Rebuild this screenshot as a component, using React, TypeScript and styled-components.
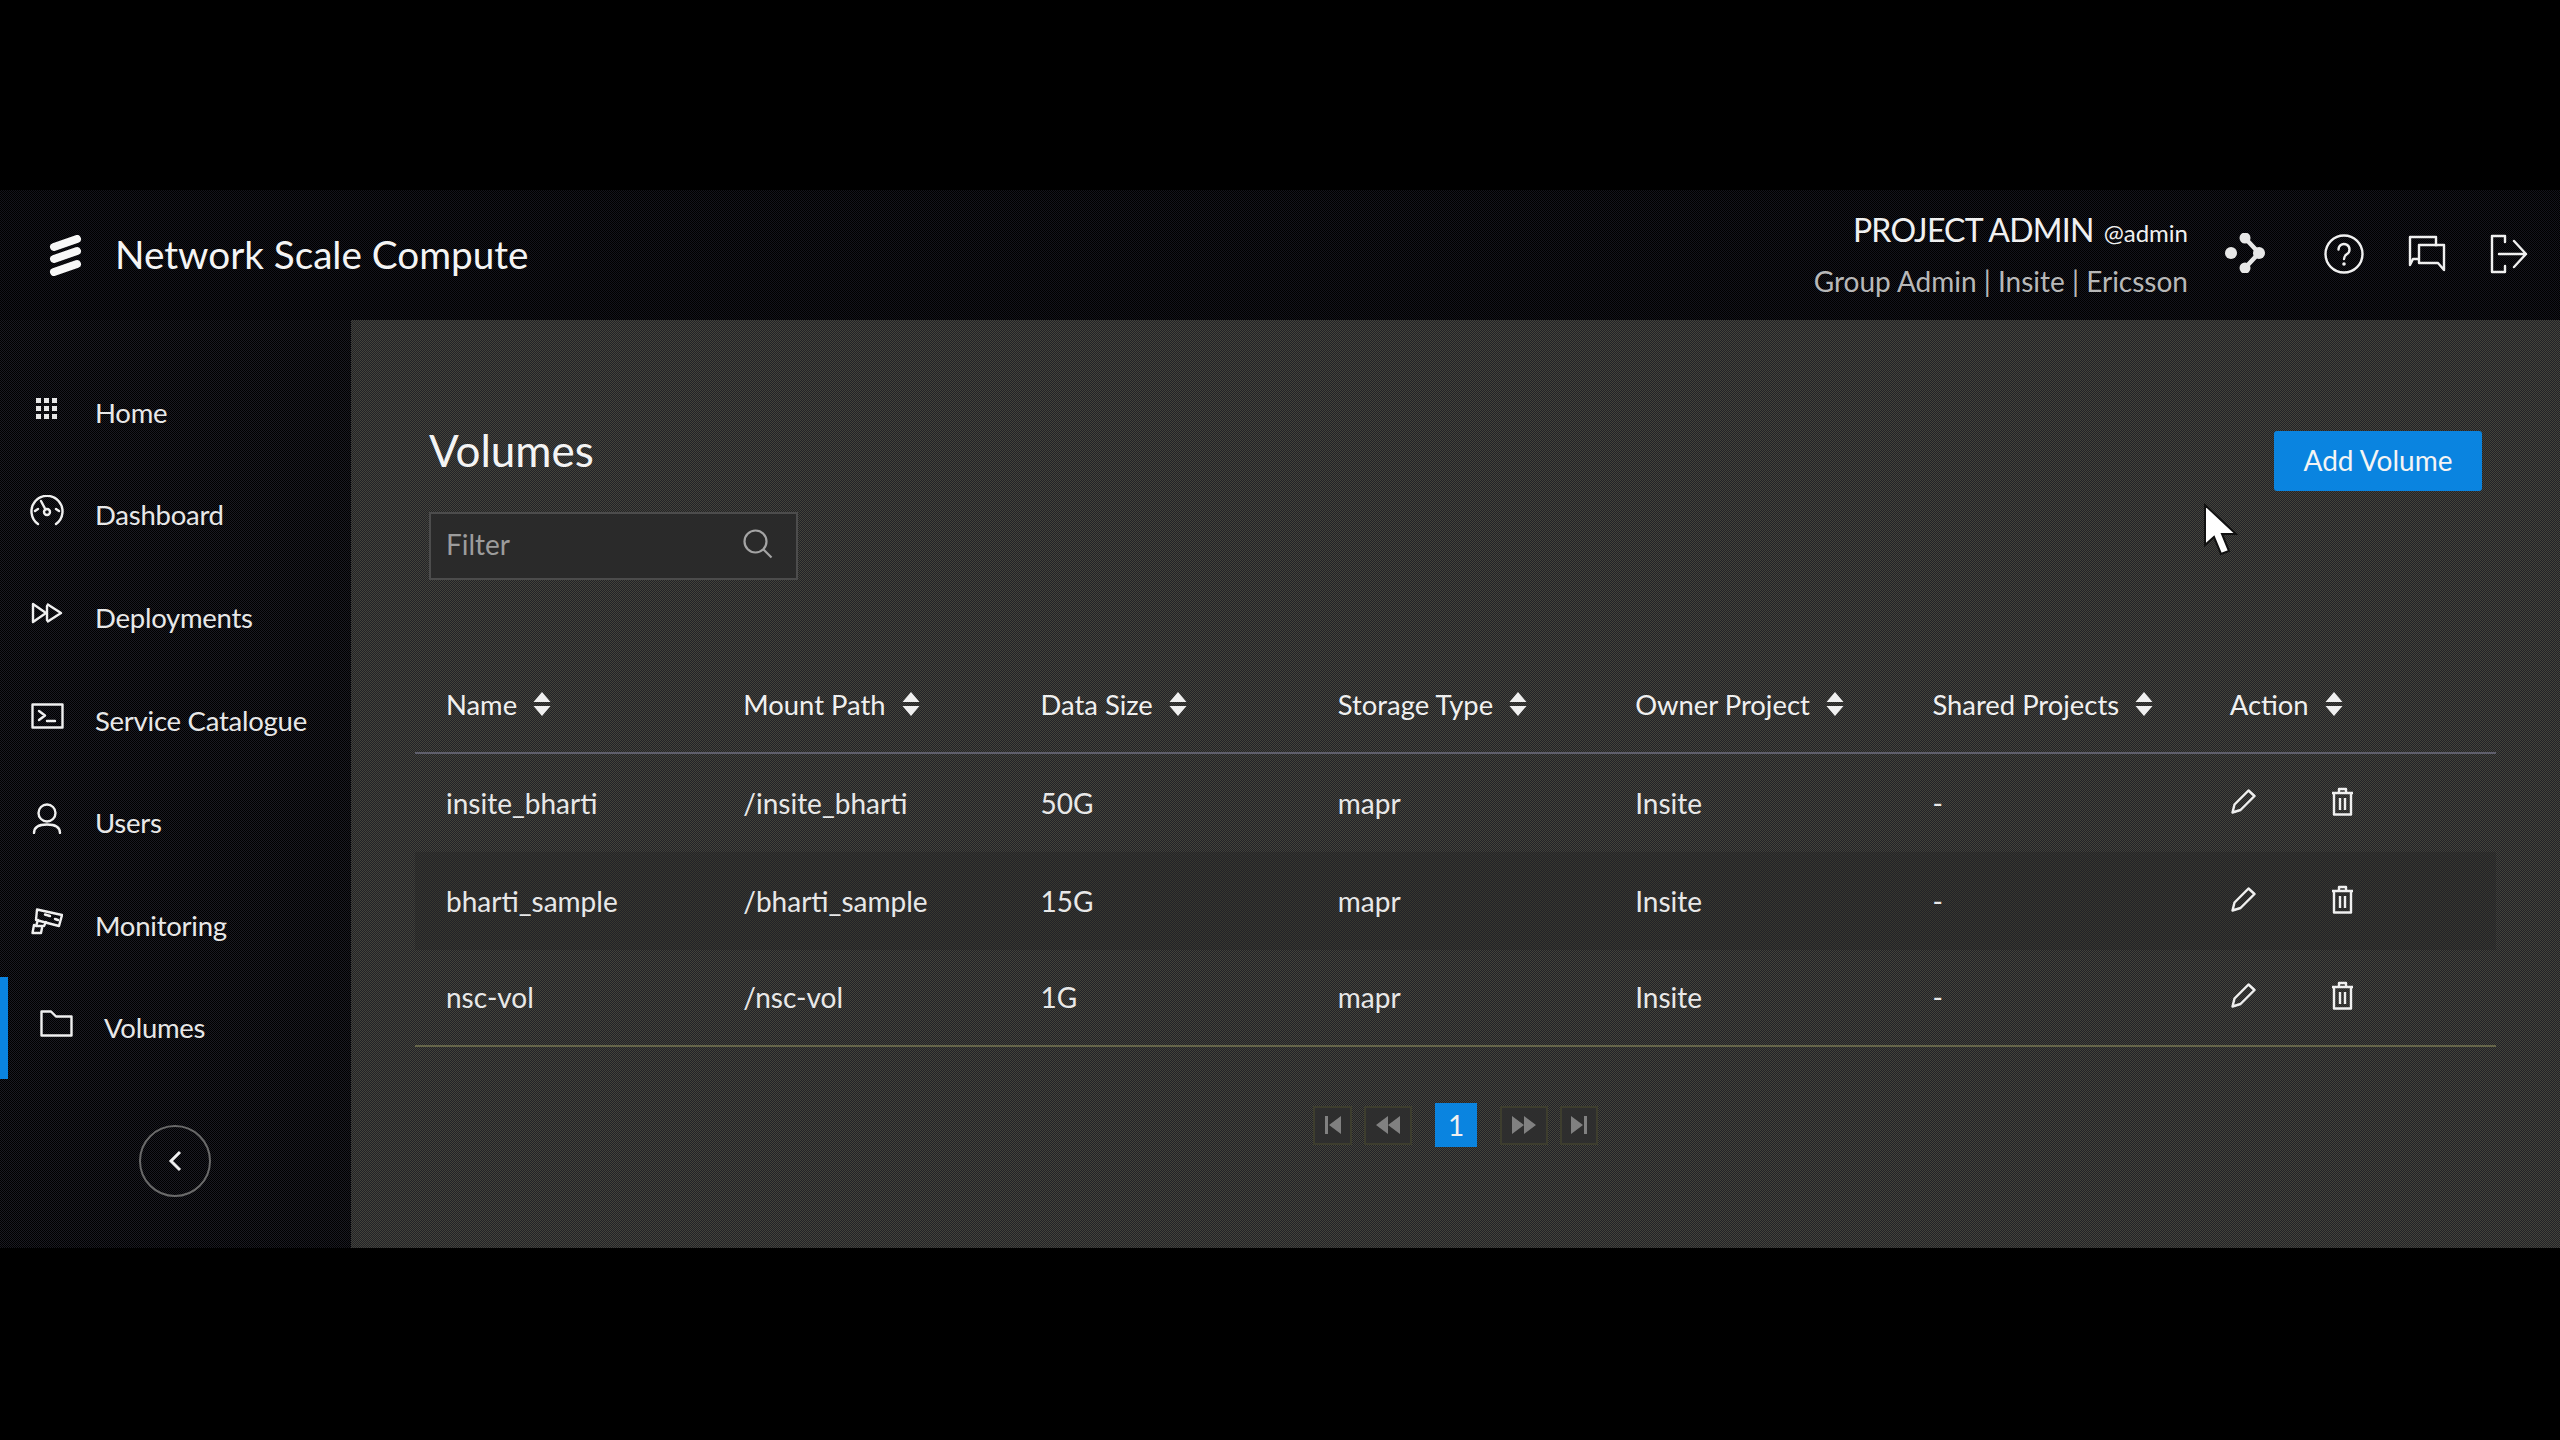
import React from "react";
import styled, { createGlobalStyle } from "styled-components";

const GlobalStyle = createGlobalStyle`
  html, body {
    margin: 0;
    padding: 0;
    background: #000;
  }
  * {
    box-sizing: border-box;
  }
`;

const FONT = `Lato, "Noto Sans", "Liberation Sans", sans-serif`;

// the capture has a fine dither over every surface
const dither = (a: string, b: string) =>
  `repeating-conic-gradient(${a} 0 25%, ${b} 0 50%) 0 0 / 2px 2px`;

const Page = styled.div`
  position: relative;
  width: 2560px;
  height: 1440px;
  padding-top: 190px;
  background: #000;
  font-family: ${FONT};
  color: #f0f0f0;
  overflow: hidden;
`;

const Frame = styled.div`
  display: flex;
  flex-direction: column;
  height: 1058px;
`;

const Header = styled.header`
  display: flex;
  align-items: center;
  justify-content: space-between;
  height: 130px;
  padding: 0 32px 0 49px;
  background: ${dither("#14141c", "#000000")};
`;

const Brand = styled.div`
  display: flex;
  align-items: center;
  gap: 33px;
`;

const BrandName = styled.div`
  margin-bottom: 2px;
  font-size: 38.7px;
  color: #f4f4f4;
`;

const HeaderRight = styled.div`
  display: flex;
  align-items: center;
`;

const UserInfo = styled.div`
  display: flex;
  flex-direction: column;
  align-items: flex-end;
  gap: 9px;
  margin-right: 37px;
`;

const UserRole = styled.div`
  display: flex;
  align-items: baseline;
  gap: 10px;
  margin-top: -2px;
  font-size: 32px;
  line-height: 42px;
  letter-spacing: -0.75px;
  color: #f0f0f0;
`;

const UserHandle = styled.span`
  font-size: 24px;
  letter-spacing: 0;
`;

const UserOrg = styled.div`
  font-size: 28px;
  line-height: 36px;
  color: #b8b8b8;
`;

const HeaderIcons = styled.div`
  display: flex;
  align-items: center;
  gap: 44px;
  padding-bottom: 3px;
`;

const ShareSlot = styled.span`
  display: flex;
  margin-right: 15px;
  margin-bottom: 2px;
`;

const Body = styled.div`
  display: flex;
  flex: 1;
  min-height: 0;
`;

const Sidebar = styled.aside`
  display: flex;
  flex-direction: column;
  width: 351px;
  padding-top: 41px;
  background: ${dither("#1a1a22", "#000000")};
`;

const NavItem = styled.div<{ $active?: boolean }>`
  display: flex;
  align-items: center;
  gap: 31px;
  height: 102.6px;
  padding-left: ${(p) => (p.$active ? 31 : 30)}px;
  border-left: ${(p) => (p.$active ? "8px solid #0a84e0" : "none")};
  font-size: 27.5px;
  letter-spacing: -0.25px;
  color: #e8e8e8;
`;

const NavIcon = styled.span`
  display: flex;
  justify-content: center;
  width: 34px;
  margin-bottom: 8px;
`;

const CollapseButton = styled.button`
  display: flex;
  align-items: center;
  justify-content: center;
  align-self: center;
  width: 72px;
  height: 72px;
  margin: 46px 2px 0 0;
  padding: 0;
  border: 2px solid #6a6a6a;
  border-radius: 50%;
  background: transparent;
`;

const Main = styled.main`
  flex: 1;
  padding: 105px 64px 0;
  background: ${dither("#43433a", "#222228")};
`;

const Toolbar = styled.div`
  display: flex;
  align-items: flex-start;
  justify-content: space-between;
  padding: 0 14px;
`;

const Title = styled.h1`
  margin: 0 0 37px;
  font-size: 44px;
  font-weight: 400;
  line-height: 50px;
  color: #f4f4f4;
`;

const FilterBox = styled.div`
  display: flex;
  align-items: center;
  justify-content: space-between;
  width: 369px;
  height: 68px;
  padding: 0 23px 4px 15px;
  border: 2px solid #4c4c4c;
  background: #2a2a2a;
  font-size: 28px;
  color: #9c9c9c;
`;

const AddButton = styled.button`
  width: 208px;
  height: 60px;
  margin-top: 6px;
  padding: 0 0 3px;
  border: none;
  border-radius: 3px;
  background: #0a84e0;
  font-family: ${FONT};
  font-size: 28px;
  color: #f4f4f4;
`;

const Table = styled.div`
  margin-top: 76px;
`;

const HeadRow = styled.div`
  display: grid;
  grid-template-columns: repeat(7, 1fr);
  align-items: center;
  height: 98px;
  border-bottom: 2px solid #5f5f6c;
  font-size: 27.4px;
  color: #f0f0f0;
`;

const HeadCell = styled.div`
  display: flex;
  align-items: center;
  gap: 16px;
  padding-left: 31px;
`;

const Row = styled.div<{ $striped?: boolean; $last?: boolean }>`
  display: grid;
  grid-template-columns: repeat(7, 1fr);
  align-items: center;
  height: 97.8px;
  background: ${(p) => (p.$striped ? dither("#37372f", "#222228") : "transparent")};
  border-bottom: ${(p) => (p.$last ? "2px solid #66664a" : "none")};
  font-size: 28px;
  color: #e8e8e8;
`;

const Cell = styled.div`
  padding-left: 31px;
`;

const Actions = styled.div`
  display: flex;
  align-items: center;
  gap: 75px;
  padding-left: 32px;
  margin-bottom: 3px;
`;

const Pager = styled.div`
  display: flex;
  align-items: center;
  justify-content: center;
  gap: 23px;
  margin-top: 56px;
`;

const PagerGroup = styled.div`
  display: flex;
  gap: 12px;
`;

const PagerArrow = styled.div<{ $w: number }>`
  display: flex;
  align-items: center;
  justify-content: center;
  width: ${(p) => p.$w}px;
  height: 39px;
  border: 2px solid #3d3d2e;
  background: #2e2e2e;
`;

const PagerCurrent = styled.div`
  display: flex;
  align-items: center;
  justify-content: center;
  width: 42px;
  height: 44px;
  background: #0a84e0;
  font-size: 28px;
  color: #f0f0f0;
`;

const Cursor = styled.svg`
  position: absolute;
  left: 2203px;
  top: 503px;
`;

const line = {
  fill: "none",
  stroke: "#f0f0f0",
  strokeWidth: 2.4,
  strokeLinecap: "round" as const,
  strokeLinejoin: "round" as const,
};

const Logo = () => (
  <svg width="33" height="41" viewBox="0 0 33 41">
    <g stroke="#f8f8f8" strokeWidth="8" strokeLinecap="round">
      <path d="M5 12 L28 4" />
      <path d="M5 24 L28 16" />
      <path d="M5 37 L28 29" />
    </g>
  </svg>
);

const ShareIcon = () => (
  <svg width="40" height="40" viewBox="0 0 40 40">
    <g fill="#e8e8e8">
      <circle cx="6" cy="20" r="6" />
      <circle cx="20" cy="5" r="5.5" />
      <circle cx="34" cy="20" r="6" />
      <circle cx="20" cy="35" r="5.5" />
    </g>
    <path d="M20 5 L34 20 L20 35" fill="none" stroke="#e8e8e8" strokeWidth="4.5" />
  </svg>
);

const HelpIcon = () => (
  <svg width="40" height="40" viewBox="0 0 40 40">
    <circle cx="20" cy="20" r="18.5" {...line} />
    <path d="M14.5 15.5 a5.5 5.5 0 1 1 8.5 4.6 c-2.2 1.5 -3 2.6 -3 5" {...line} />
    <circle cx="20" cy="30" r="1.8" fill="#f0f0f0" />
  </svg>
);

const ChatIcon = () => (
  <svg width="38" height="37" viewBox="0 0 38 37">
    <path d="M10 24 L5 24 L2 30 L2 2 L28 2 L28 10" {...line} strokeLinecap="square" />
    <path d="M11 10 L36 10 L36 35 L30 28 L11 28 Z" {...line} />
  </svg>
);

const LogoutIcon = () => (
  <svg width="38" height="40" viewBox="0 0 38 40">
    <path d="M15 2 L2 2 L2 38 L15 38 M15 2 L15 8 M15 32 L15 38" {...line} />
    <path d="M9 20 L36 20 M24 7 L36 20 L24 33" {...line} />
  </svg>
);

const GridIcon = () => (
  <svg width="22" height="21" viewBox="0 0 22 21">
    <g fill="#e8e8e8">
      {[0, 8, 16].map((y) =>
        [0, 8, 16].map((x) => <rect key={`${x}-${y}`} x={x} y={y} width="5" height="5" />)
      )}
    </g>
  </svg>
);

const GaugeIcon = () => (
  <svg width="34" height="32" viewBox="0 0 34 32">
    <path d="M8 29 A15.5 15.5 0 1 1 26 29" {...line} />
    <path d="M11 6 L15.5 14.5" {...line} />
    <circle cx="17" cy="17" r="3" {...line} />
    <path d="M5 16 L8 14 M29 16 L26 14" {...line} />
  </svg>
);

const DeployIcon = () => (
  <svg width="32" height="22" viewBox="0 0 32 22">
    <path d="M2 2 L15 11 L2 20 Z M16 2 L30 11 L16 20" {...line} strokeLinecap="butt" />
    <path d="M16 4 L16 18" {...line} />
  </svg>
);

const TerminalIcon = () => (
  <svg width="33" height="26" viewBox="0 0 33 26">
    <rect x="1.5" y="1.5" width="30" height="23" {...line} />
    <path d="M8 8 L14 12.5 L8 17 M16 18 L24 18" {...line} />
  </svg>
);

const UserIcon = () => (
  <svg width="30" height="31" viewBox="0 0 30 31">
    <circle cx="15" cy="10" r="8.5" {...line} />
    <path d="M2 30 C2 24 7 21.5 15 21.5 C23 21.5 28 24 28 30" {...line} />
  </svg>
);

const CameraIcon = () => (
  <svg width="32" height="27" viewBox="0 0 32 27">
    <path d="M6 1.5 L31 7 L28 18 L5 12 Z" {...line} />
    <path d="M14 6.5 L19 8 M7 12 L5 18 L13 18 L15 14 M1.5 25 L3 17 M1.5 25 L10 25 L11 20" {...line} />
    <path d="M24 11 L27 12" {...line} />
  </svg>
);

const FolderIcon = () => (
  <svg width="33" height="27" viewBox="0 0 33 27">
    <path d="M1.5 1.5 L11 1.5 L16 6.5 L31.5 6.5 L31.5 25.5 L1.5 25.5 Z" {...line} strokeLinecap="square" />
  </svg>
);

const ChevronLeft = () => (
  <svg width="14" height="22" viewBox="0 0 14 22">
    <path d="M12 2 L3 11 L12 20" fill="none" stroke="#f0f0f0" strokeWidth="3" />
  </svg>
);

const SearchIcon = () => (
  <svg width="30" height="30" viewBox="0 0 30 30">
    <circle cx="12.5" cy="12.5" r="11" fill="none" stroke="#a4a4a4" strokeWidth="2.2" />
    <path d="M20.5 20.5 L28.5 28.5" stroke="#a4a4a4" strokeWidth="2.2" />
  </svg>
);

const SortIcon = () => (
  <svg width="18" height="24" viewBox="0 0 18 24">
    <path d="M9 0 L17.5 10 L0.5 10 Z M0.5 14 L17.5 14 L9 24 Z" fill="#f0f0f0" />
  </svg>
);

const PencilIcon = () => (
  <svg width="25" height="25" viewBox="0 0 25 25">
    <path d="M1.5 23.5 L3.5 15.5 L17.5 1.5 L23.5 7 L9.5 21 Z" {...line} />
  </svg>
);

const TrashIcon = () => (
  <svg width="23" height="29" viewBox="0 0 23 29">
    <path d="M1 6 L22 6 M8 6 L8 2 L15 2 L15 6 M3 6 L3 27.5 L20 27.5 L20 6 M9 11 L9 23 M14 11 L14 23" {...line} strokeLinecap="butt" />
  </svg>
);

const PagerGlyph = ({ d }: { d: string }) => (
  <svg width="26" height="24" viewBox="0 0 26 24">
    <path d={d} fill="#808080" />
  </svg>
);

const NAV = [
  { label: "Home", icon: <GridIcon /> },
  { label: "Dashboard", icon: <GaugeIcon /> },
  { label: "Deployments", icon: <DeployIcon /> },
  { label: "Service Catalogue", icon: <TerminalIcon /> },
  { label: "Users", icon: <UserIcon /> },
  { label: "Monitoring", icon: <CameraIcon /> },
  { label: "Volumes", icon: <FolderIcon />, active: true },
];

const COLUMNS = [
  "Name",
  "Mount Path",
  "Data Size",
  "Storage Type",
  "Owner Project",
  "Shared Projects",
  "Action",
];

const VOLUMES = [
  { name: "insite_bharti", path: "/insite_bharti", size: "50G" },
  { name: "bharti_sample", path: "/bharti_sample", size: "15G" },
  { name: "nsc-vol", path: "/nsc-vol", size: "1G" },
];

export default function App() {
  return (
    <Page>
      <GlobalStyle />
      <Frame>
        <Header>
          <Brand>
            <Logo />
            <BrandName>Network Scale Compute</BrandName>
          </Brand>
          <HeaderRight>
            <UserInfo>
              <UserRole>
                PROJECT ADMIN <UserHandle>@admin</UserHandle>
              </UserRole>
              <UserOrg>Group Admin | Insite | Ericsson</UserOrg>
            </UserInfo>
            <HeaderIcons>
              <ShareSlot>
                <ShareIcon />
              </ShareSlot>
              <HelpIcon />
              <ChatIcon />
              <LogoutIcon />
            </HeaderIcons>
          </HeaderRight>
        </Header>
        <Body>
          <Sidebar>
            {NAV.map((item) => (
              <NavItem key={item.label} $active={item.active}>
                <NavIcon>{item.icon}</NavIcon>
                {item.label}
              </NavItem>
            ))}
            <CollapseButton>
              <ChevronLeft />
            </CollapseButton>
          </Sidebar>
          <Main>
            <Toolbar>
              <div>
                <Title>Volumes</Title>
                <FilterBox>
                  Filter
                  <SearchIcon />
                </FilterBox>
              </div>
              <AddButton>Add Volume</AddButton>
            </Toolbar>
            <Table>
              <HeadRow>
                {COLUMNS.map((col) => (
                  <HeadCell key={col}>
                    {col}
                    <SortIcon />
                  </HeadCell>
                ))}
              </HeadRow>
              {VOLUMES.map((v, i) => (
                <Row key={v.name} $striped={i === 1} $last={i === VOLUMES.length - 1}>
                  <Cell>{v.name}</Cell>
                  <Cell>{v.path}</Cell>
                  <Cell>{v.size}</Cell>
                  <Cell>mapr</Cell>
                  <Cell>Insite</Cell>
                  <Cell>-</Cell>
                  <Actions>
                    <PencilIcon />
                    <TrashIcon />
                  </Actions>
                </Row>
              ))}
            </Table>
            <Pager>
              <PagerGroup>
                <PagerArrow $w={39}>
                  <PagerGlyph d="M5 3 L8 3 L8 21 L5 21 Z M9 12 L21 3 L21 21 Z" />
                </PagerArrow>
                <PagerArrow $w={48}>
                  <PagerGlyph d="M1 12 L13 3 L13 21 Z M13 12 L25 3 L25 21 Z" />
                </PagerArrow>
              </PagerGroup>
              <PagerCurrent>1</PagerCurrent>
              <PagerGroup>
                <PagerArrow $w={48}>
                  <PagerGlyph d="M1 3 L13 12 L1 21 Z M13 3 L25 12 L13 21 Z" />
                </PagerArrow>
                <PagerArrow $w={38}>
                  <PagerGlyph d="M5 3 L17 12 L5 21 Z M18 3 L21 3 L21 21 L18 21 Z" />
                </PagerArrow>
              </PagerGroup>
            </Pager>
          </Main>
        </Body>
      </Frame>
      <Cursor width="38" height="54" viewBox="0 0 38 54">
        <path d="M2 2 L2 42 L11 34 L18 51 L26 48 L19 31 L33 31 Z" fill="#fff" stroke="#111" strokeWidth="2" />
      </Cursor>
    </Page>
  );
}
